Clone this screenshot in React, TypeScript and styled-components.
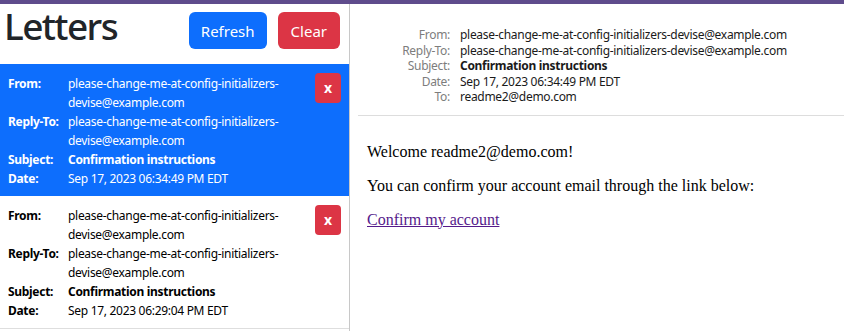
import React from "react";
import styled, { createGlobalStyle } from "styled-components";

const Global = createGlobalStyle`
  html, body { margin: 0; padding: 0; background: #fff; }
  body { font-family: "Noto Sans", "Open Sans", sans-serif; color: #212529; overflow: hidden; }
  * { box-sizing: border-box; }
`;

const TopBar = styled.div`
  height: 4px;
  background: #5f4c8c;
`;

const Main = styled.div`
  display: flex;
  height: 327px;
`;

const Sidebar = styled.aside`
  width: 350px;
  flex: none;
  border-right: 1px solid #c8c8c8;
  display: flex;
  flex-direction: column;
`;

const SideHeader = styled.header`
  height: 60px;
  display: flex;
  align-items: flex-start;
  justify-content: space-between;
  padding: 8px 9px 0 4px;
`;

const Title = styled.h1`
  margin: 0;
  font-size: 37px;
  line-height: 28px;
  letter-spacing: -1.6px;
  font-weight: 500;
  color: #212529;
`;

const Buttons = styled.div`
  display: flex;
  gap: 11px;
`;

const Btn = styled.button<{ $variant: "primary" | "danger" }>`
  height: 37px;
  padding: 0 ${(p) => (p.$variant === "primary" ? "12px" : "13px")};
  border: none;
  border-radius: 6px;
  font-family: inherit;
  font-size: 15px;
  color: #fff;
  background: ${(p) => (p.$variant === "primary" ? "#0d6efd" : "#dc3545")};
`;

const Item = styled.div<{ $active?: boolean }>`
  display: flex;
  justify-content: space-between;
  align-items: flex-start;
  padding: 10px 8px 8px 8px;
  background: ${(p) => (p.$active ? "#0d6efd" : "#fff")};
  color: ${(p) => (p.$active ? "#fff" : "#000")};
  border-bottom: ${(p) => (p.$active ? "none" : "1px solid #dedede")};
`;

const Fields = styled.div`
  display: grid;
  grid-template-columns: 60px 234px;
  font-size: 12px;
  letter-spacing: -0.3px;
  line-height: 19px;
`;

const Label = styled.div`
  font-weight: 700;
`;

const Value = styled.div<{ $bold?: boolean }>`
  font-weight: ${(p) => (p.$bold ? 700 : 400)};
`;

const XBtn = styled.button`
  width: 26px;
  height: 30px;
  margin-top: -1px;
  border: none;
  border-radius: 4px;
  background: #dc3545;
  color: #fff;
  font-family: inherit;
  font-weight: 700;
  font-size: 14px;
  padding: 0 0 2px;
`;

const Preview = styled.section`
  flex: 1;
  display: flex;
  flex-direction: column;
`;

const MailHeader = styled.div`
  display: grid;
  grid-template-columns: 100px 1fr;
  column-gap: 10px;
  padding-top: 23px;
  font-size: 12px;
  letter-spacing: -0.3px;
  line-height: 15.5px;
`;

const HLabel = styled.div`
  text-align: right;
  color: #7d7d7d;
`;

const HValue = styled.div<{ $bold?: boolean }>`
  color: #1a1a1a;
  font-weight: ${(p) => (p.$bold ? 700 : 400)};
`;

const Rule = styled.hr`
  margin: 10px 0 0 8px;
  border: none;
  border-top: 1px solid #ddd;
`;

const Body = styled.div`
  padding: 11px 17px;
  font-family: "Liberation Serif", "Times New Roman", serif;
  font-size: 16px;
  line-height: 18px;
  color: #000;
`;

const P = styled.p`
  margin: 16px 0;
`;

const Link = styled.a`
  color: #551a8b;
  text-decoration: underline;
`;

type Letter = { date: string };

const letters: Letter[] = [
  { date: "Sep 17, 2023 06:34:49 PM EDT" },
  { date: "Sep 17, 2023 06:29:04 PM EDT" },
];

export default function App() {
  return (
    <>
      <Global />
      <TopBar />
      <Main>
        <Sidebar>
          <SideHeader>
            <Title>Letters</Title>
            <Buttons>
              <Btn $variant="primary">Refresh</Btn>
              <Btn $variant="danger">Clear</Btn>
            </Buttons>
          </SideHeader>
          {letters.map((l, i) => (
            <Item key={i} $active={i === 0}>
              <Fields>
                <Label>From:</Label>
                <Value>please-change-me-at-config-initializers-devise@example.com</Value>
                <Label>Reply-To:</Label>
                <Value>please-change-me-at-config-initializers-devise@example.com</Value>
                <Label>Subject:</Label>
                <Value $bold>Confirmation instructions</Value>
                <Label>Date:</Label>
                <Value>{l.date}</Value>
              </Fields>
              <XBtn>x</XBtn>
            </Item>
          ))}
        </Sidebar>
        <Preview>
          <MailHeader>
            <HLabel>From:</HLabel>
            <HValue>please-change-me-at-config-initializers-devise@example.com</HValue>
            <HLabel>Reply-To:</HLabel>
            <HValue>please-change-me-at-config-initializers-devise@example.com</HValue>
            <HLabel>Subject:</HLabel>
            <HValue $bold>Confirmation instructions</HValue>
            <HLabel>Date:</HLabel>
            <HValue>Sep 17, 2023 06:34:49 PM EDT</HValue>
            <HLabel>To:</HLabel>
            <HValue>readme2@demo.com</HValue>
          </MailHeader>
          <Rule />
          <Body>
            <P>Welcome readme2@demo.com!</P>
            <P>You can confirm your account email through the link below:</P>
            <P>
              <Link href="#">Confirm my account</Link>
            </P>
          </Body>
        </Preview>
      </Main>
    </>
  );
}
